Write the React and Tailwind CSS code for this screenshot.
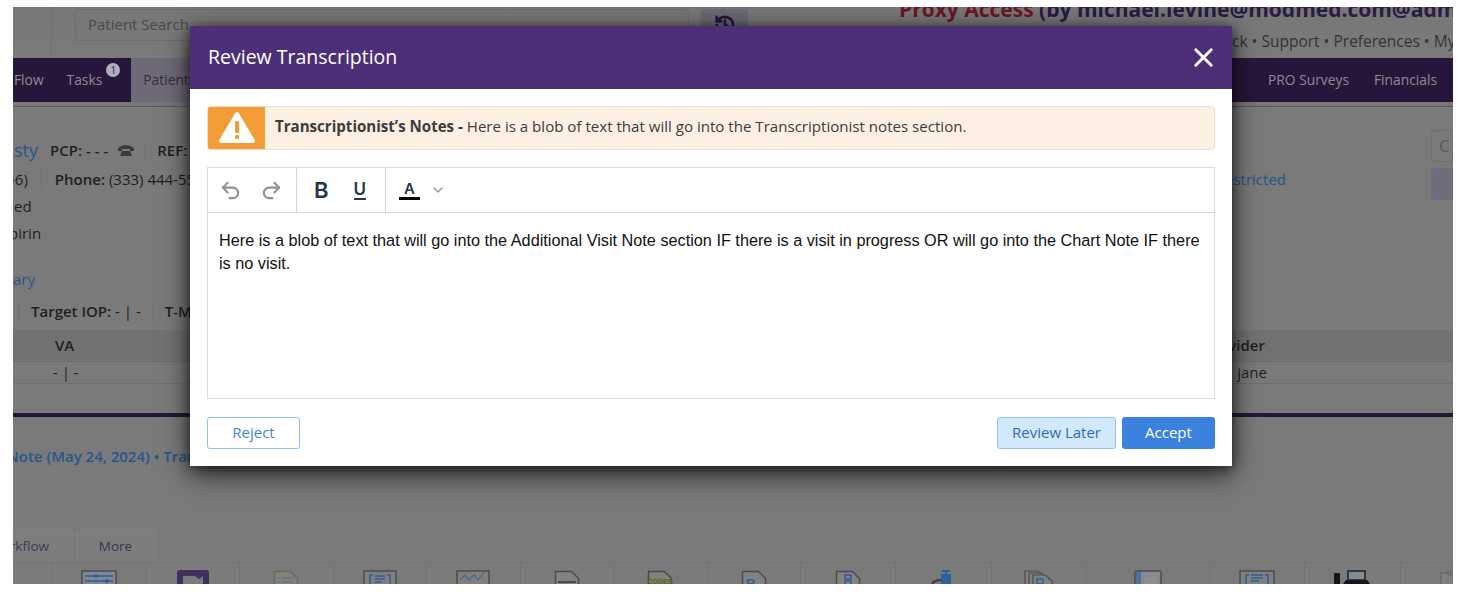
import React from "react";
import { ChevronDown, History, Redo2, Undo2, X } from "lucide-react";

const line = "#4c4c4c";
const doc = "M1.5 1.5h16l7 7v24h-23z";

const stripIcons = [
  {
    width: "w-[93.5px]",
    icon: (
      <svg width="36" height="20">
        <rect x="1" y="1" width="34" height="18" fill="#7f8791" stroke={line} strokeWidth="1.5" />
        <path d="M4 6h28M4 11h28" stroke="#2f5f9a" strokeWidth="1.5" />
        <circle cx="15" cy="6" r="2" fill="#2f5f9a" />
        <circle cx="26" cy="11" r="2" fill="#2f5f9a" />
      </svg>
    ),
  },
  {
    width: "w-[93.5px]",
    icon: (
      <svg width="32" height="20">
        <rect x="0" y="0" width="32" height="24" rx="3" fill="#3f2f5c" />
        <path d="M6 6h12l4 3 4-3v14H6z" fill="#7a7a7a" />
      </svg>
    ),
  },
  {
    width: "w-[93.5px]",
    icon: (
      <svg width="26" height="20">
        <path d={doc} fill="#828277" stroke="#6a6a6a" strokeWidth="1.5" />
        <path d="M5 8h2M9 8h11M5 12h2M9 12h11" stroke="#5f7794" strokeWidth="1.5" />
      </svg>
    ),
  },
  {
    width: "w-[93.5px]",
    icon: (
      <svg width="34" height="20">
        <rect x="1" y="1" width="32" height="18" fill="#7f7f7f" stroke={line} strokeWidth="1.5" />
        <path d="M7 15V5h3M27 15V5h-3M12 6h10M12 9h10M12 12h7" stroke="#2f5f9a" strokeWidth="1.5" fill="none" />
      </svg>
    ),
  },
  {
    width: "w-[93.5px]",
    icon: (
      <svg width="34" height="20">
        <rect x="1" y="1" width="32" height="18" fill="#7f7f7f" stroke={line} strokeWidth="1.5" />
        <path d="M4 10l5-5 4 5 5-5 4 5 6-8" stroke="#3f6796" strokeWidth="1.2" fill="none" />
      </svg>
    ),
  },
  {
    width: "w-[93.5px]",
    icon: (
      <svg width="26" height="20">
        <path d={doc} fill="#828282" stroke={line} strokeWidth="1.5" />
        <path d="M4 12h18" stroke={line} strokeWidth="2" />
      </svg>
    ),
  },
  {
    width: "w-[93.5px]",
    icon: (
      <svg width="26" height="20">
        <path d={doc} fill="#828277" stroke={line} strokeWidth="1.5" />
        <text x="13" y="14" textAnchor="middle" fontSize="7" fontWeight="700" fill="#4e6a1c" fontFamily="Liberation Sans, sans-serif">
          CODES
        </text>
      </svg>
    ),
  },
  {
    width: "w-[93px]",
    icon: (
      <svg width="26" height="20">
        <path d={doc} fill="#828282" stroke={line} strokeWidth="1.5" />
        <text x="5" y="18" fontSize="13" fontWeight="700" fill="#2f5f9a" fontFamily="Liberation Sans, sans-serif">
          R
        </text>
      </svg>
    ),
  },
  {
    width: "w-[95.5px]",
    icon: (
      <svg width="26" height="20">
        <path d={doc} fill="#828282" stroke={line} strokeWidth="1.5" />
        <path d="M10 5h6v4h-6zM10 11h6v6h-6z" fill="none" stroke="#2f5f9a" strokeWidth="1.5" />
      </svg>
    ),
  },
  {
    width: "w-[95.5px]",
    icon: (
      <svg width="24" height="20">
        <path d="M11 1h8M15 1v4" stroke="#2f5f9a" strokeWidth="2" />
        <rect x="10" y="4" width="10" height="16" fill="#2f5f9a" />
        <path d="M1 16c0-4 3-6 9-6" stroke="#3a3a3a" strokeWidth="2" fill="none" />
      </svg>
    ),
  },
  {
    width: "w-[95px]",
    icon: (
      <svg width="30" height="20">
        <path d="M1 1h12l6 4v15H1z" fill="#7f7f7f" stroke={line} strokeWidth="1.2" />
        <path d="M5 3h12l6 5v12H5z" fill="#7f7f7f" stroke={line} strokeWidth="1.2" />
        <path d="M9 5h12l7 6v9H9z" fill="#828282" stroke={line} strokeWidth="1.2" />
        <rect x="13" y="9" width="6" height="5" fill="none" stroke="#2f5f9a" strokeWidth="1.5" />
      </svg>
    ),
  },
  {
    width: "w-[123px]",
    icon: (
      <svg width="28" height="20">
        <rect x="1" y="1" width="26" height="26" rx="1" fill="#858a92" stroke={line} strokeWidth="1.5" />
        <rect x="2" y="2" width="5" height="24" fill="#4d6f9f" />
        <rect x="10" y="7" width="13" height="12" fill="#8f8f8f" />
      </svg>
    ),
  },
  {
    width: "w-[95.5px]",
    icon: (
      <svg width="36" height="20">
        <rect x="1" y="1" width="34" height="18" fill="#7f7f7f" stroke={line} strokeWidth="1.5" />
        <path d="M7 16V5h3M29 16V5h-3M12 5h12M12 8h12M12 11h8" stroke="#2f5f9a" strokeWidth="1.5" fill="none" />
      </svg>
    ),
  },
  {
    width: "w-[95.5px]",
    icon: (
      <svg width="36" height="20">
        <rect x="0" y="3" width="6" height="17" rx="1" fill="#161616" />
        <path d="M9 20v-6l3-4h21l3 4v6z" fill="#161616" />
        <rect x="14" y="1" width="17" height="9" fill="#7f8b96" stroke="#222222" strokeWidth="1.5" />
      </svg>
    ),
  },
  {
    width: "w-[56px]",
    clip: true,
    icon: (
      <svg width="28" height="20">
        <rect x="1" y="3" width="26" height="17" fill="#7f7f7f" stroke="#6a6a6a" strokeWidth="1.5" />
        <rect x="8" y="0" width="10" height="5" fill="none" stroke="#6a6a6a" strokeWidth="1.2" />
        <path d="M7 13V9M13 13V6" stroke="#5f7794" strokeWidth="1.5" />
      </svg>
    ),
  },
];

const NoteAlert = () => (
  <div className="flex h-[44px] items-stretch overflow-hidden rounded-[3px] border border-[#e6e1dc] bg-[#fdf0e3]">
    <div className="flex w-[57px] shrink-0 items-center justify-center bg-[#f39c38]">
      <svg width="38" height="34" viewBox="0 0 38 34">
        <path d="M19 3 L35 30 H3 Z" fill="#ffffff" stroke="#ffffff" strokeWidth="4" strokeLinejoin="round" />
        <rect x="17" y="10" width="4" height="12" rx="1" fill="#f39c38" />
        <rect x="17" y="24" width="4" height="4" rx="1" fill="#f39c38" />
      </svg>
    </div>
    <p className="flex items-center pb-[3px] pl-[10px] text-[15.08px] text-[#3c3c3c]">
      <strong className="font-bold">Transcriptionist’s Notes -&nbsp;</strong>
      Here is a blob of text that will go into the Transcriptionist notes section.
    </p>
  </div>
);

const EditorToolbar = () => (
  <div className="flex h-[45px] items-stretch border-b border-[#d6d6d6]">
    <div className="flex w-[89px] items-center gap-[18px] border-r border-[#d6d6d6] pl-[11px] text-[#8c9298]">
      <Undo2 size={23} strokeWidth={2.2} />
      <Redo2 size={23} strokeWidth={2.2} />
    </div>
    <div className="flex w-[89px] items-center gap-[25px] border-r border-[#d6d6d6] pl-[17px] text-[#26364a]">
      <span className="text-[22px] leading-none font-semibold" style={{ fontFamily: "Inter, sans-serif" }}>
        B
      </span>
      <span className="border-b-2 border-[#26364a] text-[17px] leading-[17px] font-semibold" style={{ fontFamily: "Inter, sans-serif" }}>
        U
      </span>
    </div>
    <div className="flex items-center pl-[13px]">
      <span className="w-[21px] border-b-[3px] border-black text-center text-[15px] leading-[17px] font-semibold text-[#26364a]" style={{ fontFamily: "Inter, sans-serif" }}>
        A
      </span>
      <ChevronDown size={16} className="ml-[10px] text-[#8c9298]" />
    </div>
  </div>
);

const ReviewModal = () => (
  <div className="w-[1042px] bg-white shadow-[0_8px_26px_rgba(0,0,0,0.7),0_2px_10px_rgba(0,0,0,0.5)]">
    <div className="flex h-[63px] items-center justify-between bg-[#4d2f77] pr-[13px] pl-[18px]">
      <h1 className="pb-[1px] text-[19.5px] text-white">Review Transcription</h1>
      <X size={31} strokeWidth={2.2} className="text-white" />
    </div>
    <div className="px-[17px] pt-[17px] pb-[17px]">
      <NoteAlert />
      <div className="mt-[17px] h-[232px] border border-[#dcdcdc]">
        <EditorToolbar />
        <p className="px-[11px] pt-[16px] text-[16.25px] leading-[23px] text-[#111111]" style={{ fontFamily: "'Liberation Sans', Arial, sans-serif" }}>
          Here is a blob of text that will go into the Additional Visit Note section IF there is a visit in progress OR will go into the Chart Note IF there is no visit.
        </p>
      </div>
      <div className="mt-[18px] flex items-stretch text-[15px]">
        <button className="h-[32px] w-[93px] rounded-[3px] border-[1.5px] border-[#8fc1f3] bg-white pb-[1px] text-[#3d82db]">Reject</button>
        <button className="ml-auto h-[32px] w-[119px] rounded-[3px] border-[1.5px] border-[#8fc1f3] bg-[#d2e8fb] pb-[1px] text-[#2f6cb5]">Review Later</button>
        <button className="ml-[6px] h-[32px] w-[93px] rounded-[3px] bg-[#3b82de] pb-[1px] text-white">Accept</button>
      </div>
    </div>
  </div>
);

const PageBehind = () => (
  <div className="w-[1440px] text-[15px] text-[#1f1f1f]">
    {/* top header */}
    <div className="flex h-[51px] bg-gradient-to-b from-[#777777] to-[#7a7a7a]">
      <div className="w-[39px] shrink-0 border-r border-[#6f6f6f]" />
      <div className="mt-[2px] ml-[23px] flex h-[32px] w-[614px] items-center rounded-[4px] border border-[#6d6d6d] pb-[1px] pl-[12px] text-[#4a4a4a]">
        Patient Search
      </div>
      <div className="mt-[2px] ml-[12px] flex h-[40px] w-[47px] items-start justify-center rounded-[4px] bg-[#6a6a76] pt-[5px] text-[#26173f]">
        <History size={22} strokeWidth={3} />
      </div>
      <div className="ml-[151px] min-w-0 flex-1 overflow-hidden">
        <div className="-mt-[12px] text-[21px] leading-[28px] font-bold whitespace-nowrap text-[#2a1a44]">
          <span className="text-[#6b1526]">Proxy Access</span> (by michael.levine@modmed.com@admin)
        </div>
        <div className="mt-[8px] ml-[280px] text-[15.5px] leading-[20px] whitespace-nowrap text-[#343434]">Feedback • Support • Preferences • My Account</div>
      </div>
    </div>

    {/* nav */}
    <div className="flex h-[44px] items-stretch bg-[#26173a] pt-[1px] text-[13.8px] text-[#8e8a94]">
      <div className="flex items-center pl-[1px]">Flow</div>
      <div className="relative ml-[23px] flex items-center">
        Tasks
        <span className="absolute top-[4px] -right-[18px] flex h-[14px] w-[14px] items-center justify-center rounded-full bg-[#aeaebd] text-[10px] text-[#26173a]">1</span>
      </div>
      <div className="-mt-[1px] ml-[29px] flex w-[120px] items-center bg-[#6e6a78] pt-[1px] pl-[12px] text-[#332a4a]">Patients</div>
      <div className="ml-auto flex items-center">
        <span className="mr-[25px]">PRO Surveys</span>
        <span className="mr-[16px]">Financials</span>
      </div>
    </div>
    <div className="h-[5px] border-b border-[#5a5a5a] bg-[#777777]" />

    {/* patient info */}
    <div className="flex h-[223px]">
      <div className="w-[1418px] shrink-0">
        <div className="mt-[26px] flex h-[34px] items-center font-semibold">
          <span className="pl-[1px] text-[18px] font-normal text-[#27568f]">sty</span>
          <span className="ml-[12px]">PCP: - - -</span>
          <svg width="16" height="12" viewBox="0 0 16 12" className="ml-[10px]">
            <path d="M0 5C2 0 14 0 16 5v2h-4V5H4v2H0zM4 7h8l2 5H2z" fill="#3a3a3a" />
          </svg>
          <span className="mx-[11px] h-[20px] border-l border-[#6f6f6f]" />
          <span>REF:</span>
        </div>
        <div className="flex h-[24px] items-center justify-start pr-[145px]">
          <span className="-ml-[3px]">-6)</span>
          <span className="mx-[13px] h-[20px] border-l border-[#6f6f6f]" />
          <span className="font-semibold">Phone:</span>
          <span>&nbsp;(333) 444-5555</span>
          <span className="ml-auto text-[#27568f]">Restricted</span>
        </div>
        <div className="mt-[3px] flex h-[24px] items-center pl-[1px]">ed</div>
        <div className="mt-[3px] flex h-[24px] items-center">
          <span className="-ml-[4px]">pirin</span>
        </div>
        <div className="mt-[22px] flex h-[24px] items-center text-[#27568f]">ary</div>
        <div className="mt-[6px] flex h-[28px] items-center font-semibold">
          <span className="ml-[5px] h-[20px] border-l border-[#6f6f6f]" />
          <span className="ml-[12px]">Target IOP:</span>
          <span className="font-normal">&nbsp;- | -</span>
          <span className="ml-[12px] h-[20px] border-l border-[#6f6f6f]" />
          <span className="ml-[11px]">T-MAX</span>
        </div>
      </div>
      <div className="mt-[23px] flex w-[22px] shrink-0 flex-col gap-[6px]">
        <div className="flex h-[32px] items-center rounded-l-[4px] border border-[#707070] pl-[7px] text-[17px] text-[#5a5a5a]">C</div>
        <div className="h-[32px] rounded-l-[4px] bg-[#6e6d7c]" />
      </div>
    </div>

    {/* table */}
    <div className="flex h-[32px] items-center border-b border-[#6c6c6c] bg-[#727272] font-semibold">
      <span className="ml-[42px]">VA</span>
      <span className="mr-[188px] ml-auto">Provider</span>
    </div>
    <div className="flex h-[22px] items-center border-b border-[#6f6f6f]">
      <span className="ml-[40px]">- | -</span>
      <span className="mr-[186px] ml-auto">jane</span>
    </div>

    <div className="mt-[29px] h-[4px] bg-[#26173a]" />
    <div className="mt-[29px] h-[20px] overflow-hidden text-[15px] leading-[20px] font-semibold whitespace-nowrap text-[#27568f]">
      <span className="-ml-[6px]">Note (May 24, 2024) • Transcription</span>
    </div>

    {/* tabs */}
    <div className="mt-[63px] flex h-[33px] items-stretch text-[13.5px] text-[#3b3054]">
      <div className="flex w-[60px] items-center justify-end rounded-tr-[4px] border-t border-r border-[#818181] bg-[#7d7d7d] pr-[23px] text-[#3f3a50]">rkflow</div>
      <div className="ml-[3px] flex w-[79px] items-center justify-center rounded-t-[4px] border-x border-t border-[#818181] bg-[#7d7d7d]">More</div>
    </div>

    {/* icon strip */}
    <div className="flex h-[22px] items-stretch overflow-hidden border-t border-[#737373]">
      <div className="w-[39px] shrink-0" />
      {stripIcons.map((cell, index) => (
        <div key={index} className={`${cell.width} flex shrink-0 overflow-hidden border-l border-[#737373] pt-[7px] ${cell.clip ? "justify-start pl-[39px]" : "justify-center"}`}>
          {cell.icon}
        </div>
      ))}
    </div>
  </div>
);

export default function App() {
  return (
    <div className="h-[592px] w-[1464px] overflow-hidden bg-white pt-[7px] pl-[13px]" style={{ fontFamily: "'Open Sans', sans-serif" }}>
      <div className="relative h-[577px] w-[1440px] overflow-hidden bg-[#7a7a7a]">
        <PageBehind />
        <div className="absolute inset-0 pt-[19px] pl-[177px]">
          <ReviewModal />
        </div>
      </div>
    </div>
  );
}
